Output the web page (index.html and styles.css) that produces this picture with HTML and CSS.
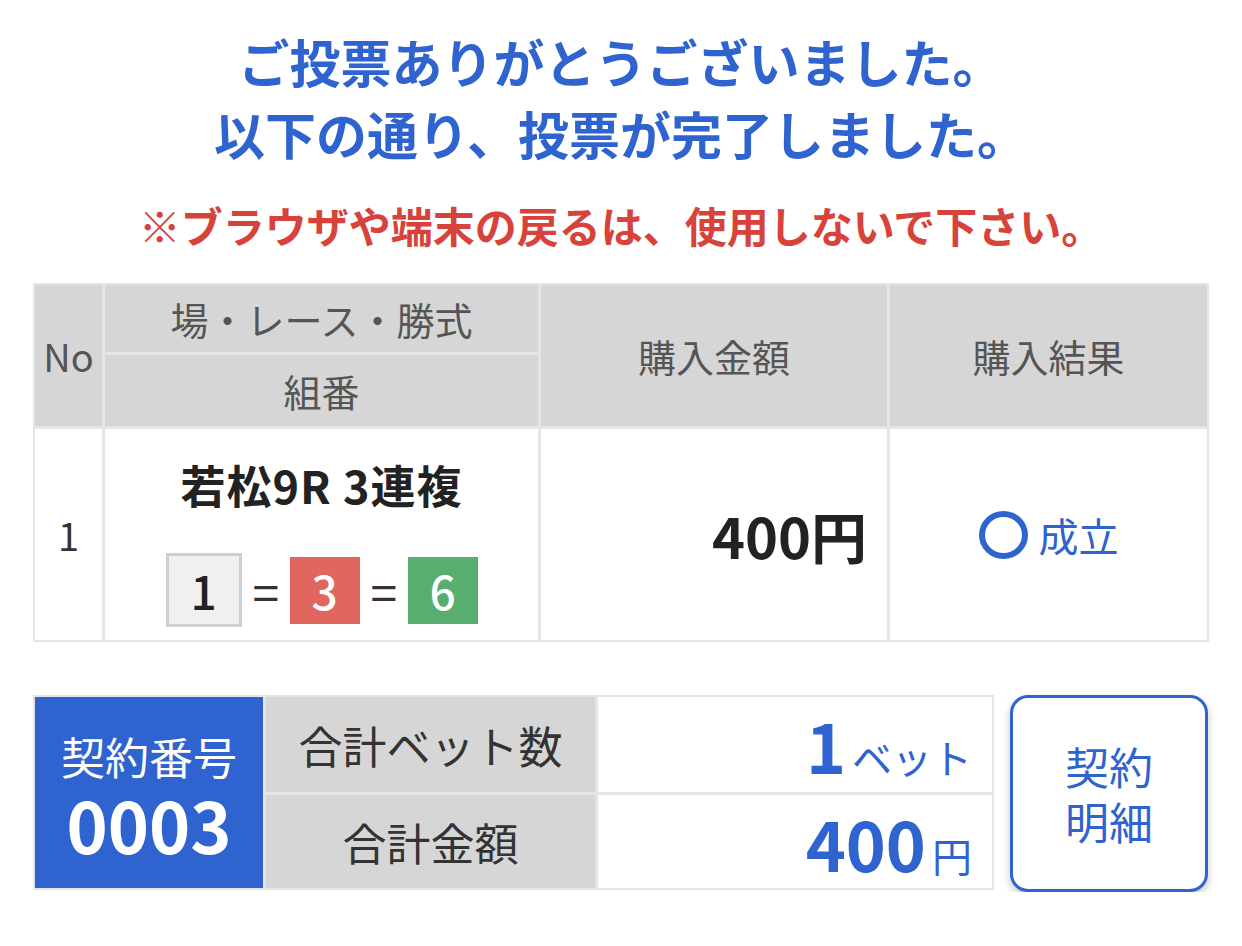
FILE: index.html
```html
<!DOCTYPE html>
<html lang="ja">
<head>
<meta charset="utf-8">
<title>投票完了</title>
<link rel="stylesheet" href="styles.css">
</head>
<body>
<div class="page">
  <h1 class="thanks">ご投票ありがとうございました。<br>以下の通り、投票が完了しました。</h1>
  <p class="warn">※ブラウザや端末の戻るは、使用しないで下さい。</p>

  <div class="bets">
    <div class="th th-no">No</div>
    <div class="th th-race">場・レース・勝式</div>
    <div class="th th-amount">購入金額</div>
    <div class="th th-result">購入結果</div>
    <div class="th th-combo">組番</div>

    <div class="td td-no">1</div>
    <div class="td td-race">
      <div class="race-name">若松9R 3連複</div>
      <div class="combo">
        <span class="num num-1">1</span>
        <span class="eq">=</span>
        <span class="num num-3">3</span>
        <span class="eq">=</span>
        <span class="num num-6">6</span>
      </div>
    </div>
    <div class="td td-amount">400円</div>
    <div class="td td-result"><span class="ok-mark"></span><span class="ok-text">成立</span></div>
  </div>

  <div class="footer">
    <div class="summary">
      <div class="contract">
        <div class="contract-label">契約番号</div>
        <div class="contract-no">0003</div>
      </div>
      <div class="sum-label">合計ベット数</div>
      <div class="sum-value"><span class="big">1</span><span class="unit">ベット</span></div>
      <div class="sum-label">合計金額</div>
      <div class="sum-value"><span class="big">400</span><span class="unit">円</span></div>
    </div>
    <button class="detail-btn" type="button">契約<br>明細</button>
  </div>
</div>
</body>
</html>
```

FILE: styles.css
```css
* { box-sizing: border-box; }

body {
  margin: 0;
  background: #ffffff;
  font-family: "Noto Sans CJK JP", "Noto Sans", sans-serif;
  color: #222222;
}

.page {
  padding: 25px 33px 0 33px;
  width: 1242px;
}

.thanks {
  margin: 0;
  text-align: center;
  font-size: 51px;
  line-height: 72px;
  font-weight: 700;
  color: #2f63cf;
}

.warn {
  margin: 26px 0 0 0;
  text-align: center;
  font-size: 42px;
  line-height: 60px;
  font-weight: 700;
  color: #d7423a;
}

/* bets table */
.bets {
  margin-top: 28px;
  display: grid;
  grid-template-columns: 67px 433px 346px 317px;
  grid-template-rows: 67px 71px 211px;
  gap: 3px;
  padding: 2px;
  background: #e5e5e5;
  width: 1176px;
}

.th {
  background: #d6d6d6;
  color: #555555;
  font-size: 38px;
  display: flex;
  align-items: center;
  justify-content: center;
}

.th-no { grid-column: 1; grid-row: 1 / span 2; }
.th-race { grid-column: 2; grid-row: 1; }
.th-combo { grid-column: 2; grid-row: 2; }
.th-amount { grid-column: 3; grid-row: 1 / span 2; }
.th-result { grid-column: 4; grid-row: 1 / span 2; }

.td {
  background: #ffffff;
  display: flex;
  align-items: center;
  justify-content: center;
}

.td-no {
  font-size: 38px;
  color: #333333;
}

.td-race {
  flex-direction: column;
  justify-content: flex-start;
  padding-top: 31px;
  gap: 43px;
}

.race-name {
  font-size: 45px;
  line-height: 50px;
  font-weight: 700;
  letter-spacing: 1px;
  color: #222222;
}

.combo {
  display: flex;
  align-items: center;
  gap: 11px;
}

.num {
  width: 70px;
  height: 67px;
  display: flex;
  align-items: center;
  justify-content: center;
  font-size: 46px;
  font-weight: 500;
  color: #ffffff;
}

.num-1 {
  width: 76px;
  height: 74px;
  background: #f1f1f1;
  border: 3px solid #cfcfcf;
  color: #222222;
}

.num-3 { background: #e1665f; }
.num-6 { background: #58ad6f; }

.eq {
  font-size: 48px;
  line-height: 50px;
  color: #333333;
  width: 26px;
  text-align: center;
}

.td-amount {
  justify-content: flex-end;
  padding-right: 20px;
  font-size: 56px;
  font-weight: 700;
  color: #222222;
}

.td-result {
  gap: 11px;
  color: #2f63cf;
  font-size: 40px;
}

.ok-mark {
  width: 49px;
  height: 48px;
  border: 6px solid #2f63cf;
  border-radius: 50%;
}

/* footer */
.footer {
  margin-top: 53px;
  display: flex;
  align-items: flex-start;
  gap: 16px;
}

.summary {
  display: grid;
  grid-template-columns: 228px 329px 394px;
  grid-template-rows: 95px 93px;
  gap: 3px;
  padding: 2px;
  background: #e5e5e5;
}

.contract {
  grid-column: 1;
  grid-row: 1 / span 2;
  background: #2f63cf;
  color: #ffffff;
  display: flex;
  flex-direction: column;
  align-items: center;
  justify-content: center;
  padding-bottom: 2px;
}

.contract-label {
  font-size: 44px;
  line-height: 64px;
}

.contract-no {
  font-size: 70px;
  line-height: 72px;
  font-weight: 700;
}

.sum-label {
  background: #d6d6d6;
  color: #333333;
  font-size: 44px;
  display: flex;
  align-items: center;
  justify-content: center;
}

.sum-value {
  background: #ffffff;
  color: #2f63cf;
  display: flex;
  align-items: baseline;
  justify-content: flex-end;
  padding: 8px 20px 0 0;
  gap: 6px;
}

.sum-value .big {
  font-size: 68px;
  line-height: 80px;
  font-weight: 700;
}

.sum-value .unit {
  font-size: 40px;
}

.detail-btn {
  width: 198px;
  height: 197px;
  background: #ffffff;
  border: 3px solid #2f63cf;
  border-radius: 18px;
  box-shadow: 0 4px 8px rgba(0, 0, 0, 0.22);
  color: #2f63cf;
  font-family: "Noto Sans CJK JP", "Noto Sans", sans-serif;
  font-size: 44px;
  line-height: 55px;
  padding: 0;
}
```
